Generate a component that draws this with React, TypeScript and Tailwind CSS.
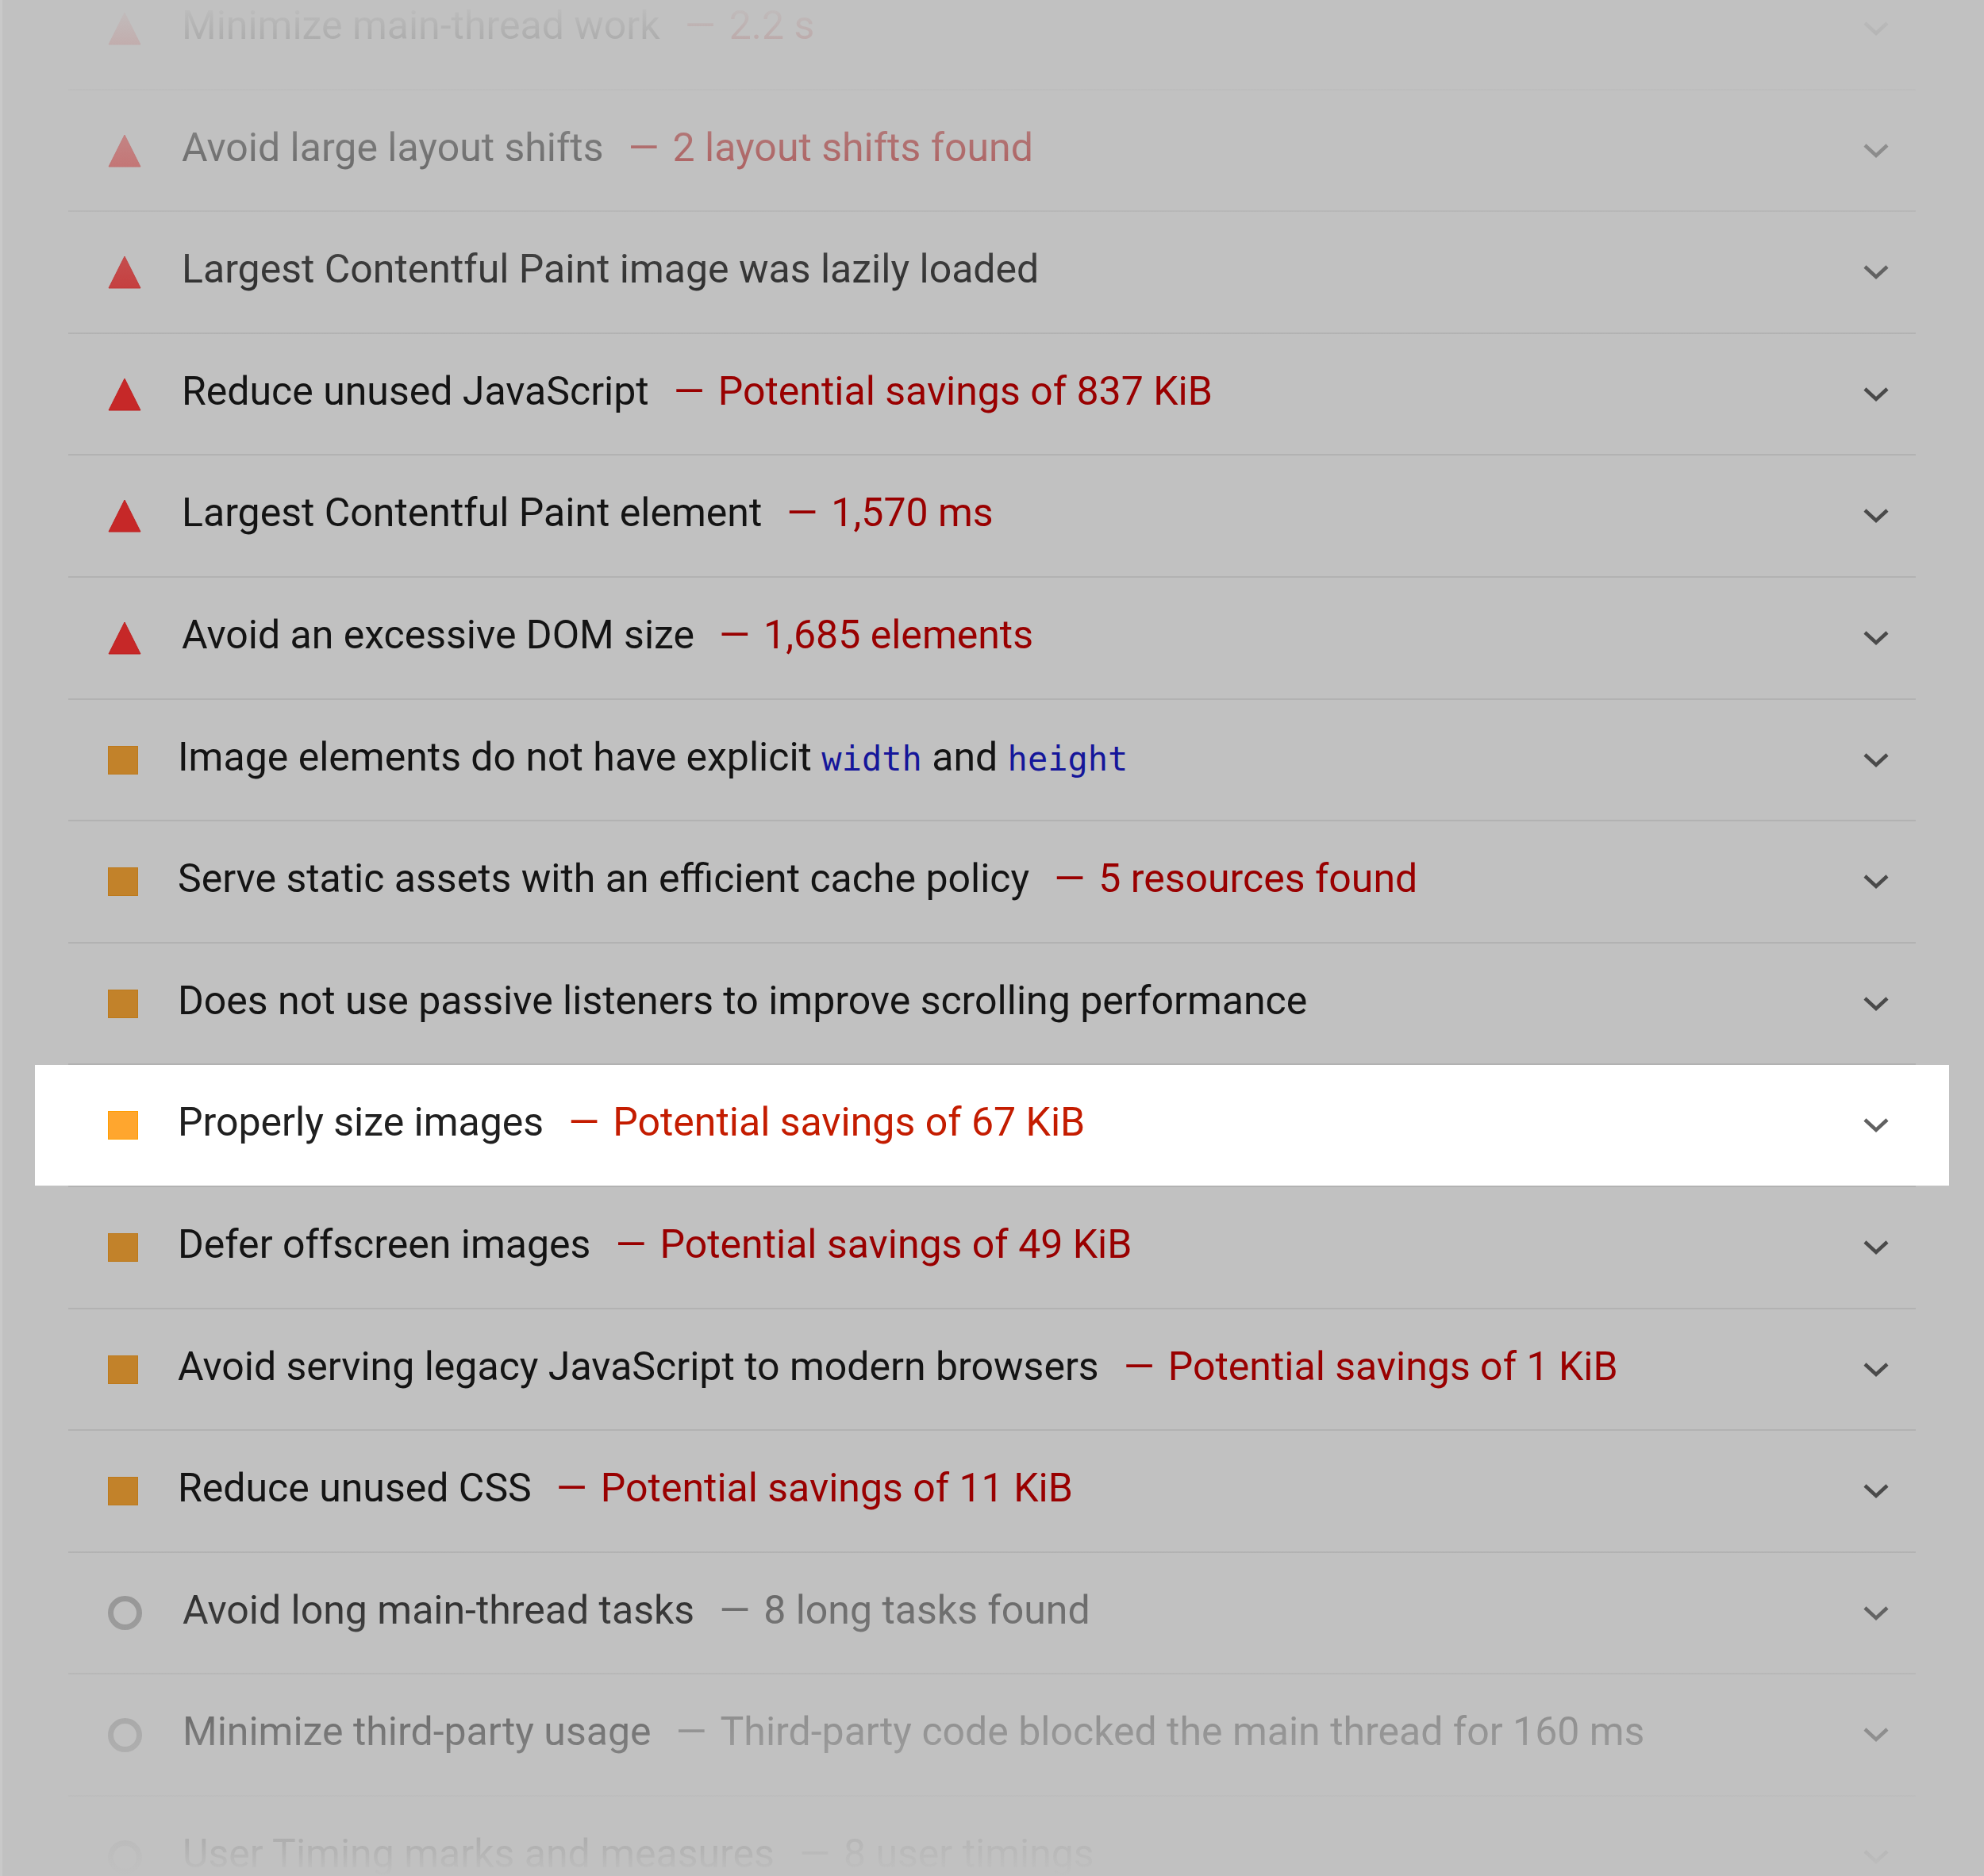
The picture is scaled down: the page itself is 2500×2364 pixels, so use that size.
import { Fragment } from 'react'

type Kind = 'fail' | 'average' | 'info'

type Audit = {
  kind: Kind
  title: React.ReactNode
  value?: string
  active?: boolean
}

const audits: Audit[] = [
  { kind: 'fail', title: 'Minimize main-thread work', value: '2.2 s' },
  { kind: 'fail', title: 'Avoid large layout shifts', value: '2 layout shifts found' },
  { kind: 'fail', title: 'Largest Contentful Paint image was lazily loaded' },
  { kind: 'fail', title: 'Reduce unused JavaScript', value: 'Potential savings of 837 KiB' },
  { kind: 'fail', title: 'Largest Contentful Paint element', value: '1,570 ms' },
  { kind: 'fail', title: 'Avoid an excessive DOM size', value: '1,685 elements' },
  {
    kind: 'average',
    title: (
      <>
        Image elements do not have explicit <Code>width</Code> and <Code>height</Code>
      </>
    ),
  },
  { kind: 'average', title: 'Serve static assets with an efficient cache policy', value: '5 resources found' },
  { kind: 'average', title: 'Does not use passive listeners to improve scrolling performance' },
  { kind: 'average', title: 'Properly size images', value: 'Potential savings of 67 KiB', active: true },
  { kind: 'average', title: 'Defer offscreen images', value: 'Potential savings of 49 KiB' },
  { kind: 'average', title: 'Avoid serving legacy JavaScript to modern browsers', value: 'Potential savings of 1 KiB' },
  { kind: 'average', title: 'Reduce unused CSS', value: 'Potential savings of 11 KiB' },
  { kind: 'info', title: 'Avoid long main-thread tasks', value: '8 long tasks found' },
  { kind: 'info', title: 'Minimize third-party usage', value: 'Third-party code blocked the main thread for 160 ms' },
  { kind: 'info', title: 'User Timing marks and measures', value: '8 user timings' },
]

function Code({ children }: { children: React.ReactNode }) {
  return <span className="font-['DejaVu_Sans_Mono',monospace] text-[42px] text-[#15169a]">{children}</span>
}

function ScoreIcon({ kind, active }: { kind: Kind; active?: boolean }) {
  if (kind === 'fail') {
    return (
      <svg width="42" height="42" viewBox="0 0 42 42" className="mr-[51px] shrink-0">
        <polygon points="21,1 41,41 1,41" fill="#c62828" stroke="#bf1f1f" strokeWidth="1" />
      </svg>
    )
  }
  if (kind === 'average') {
    return (
      <div
        className={
          active
            ? 'mr-[50px] h-[36px] w-[38px] shrink-0 border border-[#ff9d00] bg-[#ffa62e]'
            : 'mr-[50px] h-[36px] w-[38px] shrink-0 border border-[#bd7a1c] bg-[#c2822a]'
        }
      />
    )
  }
  return <div className="mr-[51px] h-[43px] w-[43px] shrink-0 rounded-full border-[7px] border-[#8f8f8f]" />
}

function Chevron({ active }: { active?: boolean }) {
  return (
    <svg width="34" height="22" viewBox="0 0 34 22" className="mr-[33px] shrink-0">
      <polyline
        points="3,4 17,17 31,4"
        fill="none"
        stroke={active ? '#616161' : '#4a4a4a'}
        strokeWidth="4.5"
      />
    </svg>
  )
}

export default function App() {
  return (
    <div className="relative h-[2364px] w-[2500px] overflow-hidden border-l-[3px] border-[#c9c9c9] bg-[#c1c1c1] font-['Roboto',sans-serif]">
      <div className="-mt-[40px] ml-[83px] w-[2328px]">
        {audits.map((a, i) => {
          const h = i % 5 === 1 || i % 5 === 3 ? 'h-[151px]' : 'h-[152px]'
          const valueColor = a.active ? 'text-[#c41c00]' : a.kind === 'info' ? 'text-[#5a5a5a]' : 'text-[#990000]'
          return (
            <Fragment key={i}>
              {i > 0 && <div className="h-[2px] bg-[#b2b2b2]" />}
              <div className={a.active ? '-mx-[42px] bg-white px-[42px]' : ''}>
                <div className={`flex items-center pl-[50px] ${h}`}>
                  <ScoreIcon kind={a.kind} active={a.active} />
                  <div className="flex flex-1 items-center whitespace-nowrap pb-[8px] text-[50px] leading-none">
                    <span className={a.active ? 'text-[#202020]' : 'text-[#141414]'}>{a.title}</span>
                    {a.value && (
                      <>
                        <span className={`ml-[31px] mr-[17px] ${valueColor}`}>—</span>
                        <span className={valueColor}>{a.value}</span>
                      </>
                    )}
                  </div>
                  <Chevron active={a.active} />
                </div>
              </div>
            </Fragment>
          )
        })}
      </div>

      {/* fade at top and bottom */}
      <div className="pointer-events-none absolute inset-x-0 top-0 h-[430px] bg-linear-to-b from-[#c1c1c1] to-[#c1c1c1]/0" />
      <div className="pointer-events-none absolute inset-x-0 bottom-0 h-[420px] bg-linear-to-t from-[#c1c1c1] to-[#c1c1c1]/0" />
    </div>
  )
}
